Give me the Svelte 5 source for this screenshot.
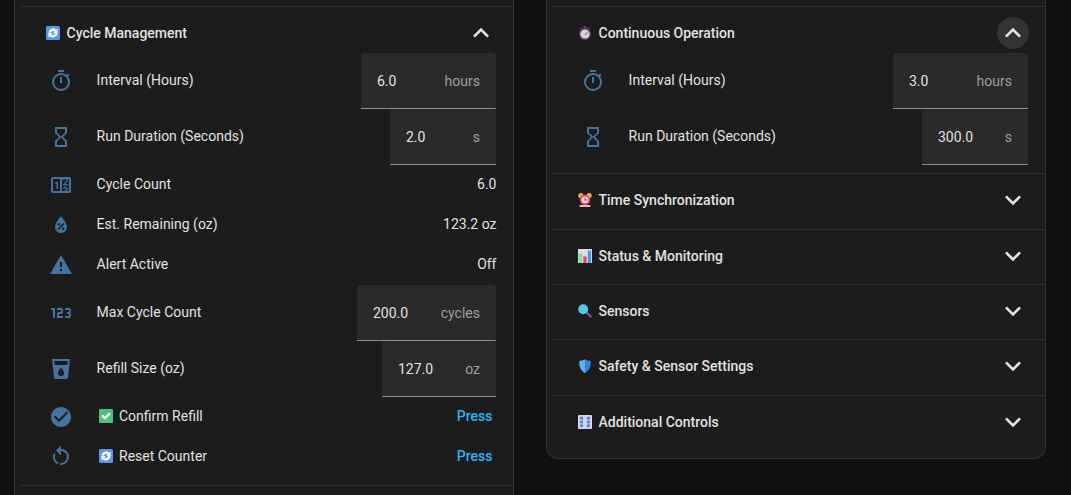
<script>
  const P = {
    timer: "M12,20A7,7 0 0,1 5,13A7,7 0 0,1 12,6A7,7 0 0,1 19,13A7,7 0 0,1 12,20M19.03,7.39L20.45,5.97C20,5.46 19.55,5 19.04,4.56L17.62,6C16.07,4.74 14.12,4 12,4A9,9 0 0,0 3,13A9,9 0 0,0 12,22C17,22 21,17.97 21,13C21,10.88 20.26,8.93 19.03,7.39M11,14H13V8H11M15,1H9V3H15V1Z",
    sand: "M6,2V8H6V8L10,12L6,16V16H6V22H18V16H18V16L14,12L18,8V8H18V2H6M16,16.5V20H8V16.5L12,12.5L16,16.5M12,11.5L8,7.5V4H16V7.5L12,11.5Z",
    counter: "M4,4H20A2,2 0 0,1 22,6V18A2,2 0 0,1 20,20H4A2,2 0 0,1 2,18V6A2,2 0 0,1 4,4M4,6V18H11V6H4M20,18V6H18.76C19,6.54 18.95,7.07 18.95,7.13C18.88,7.8 18.41,8.5 18.24,8.75L15.91,11.3L19.23,11.28L19.24,12.5L14.04,12.47L14,11.47C14,11.47 17.05,8.24 17.2,7.95C17.34,7.67 17.91,6 16.5,6C15.27,6.05 15.41,7.3 15.41,7.3L13.87,7.31C13.87,7.31 13.88,6.65 14.25,6H13V18H15.58L15.57,17.14L16.54,17.13C16.54,17.13 17.45,16.97 17.46,16.08C17.5,15.08 16.65,15.08 16.5,15.08C16.37,15.08 15.43,15.13 15.43,15.95H13.91C13.91,15.95 13.95,13.89 16.5,13.89C19.1,13.89 18.96,15.91 18.96,15.91C18.96,15.91 19,17.16 17.85,17.63L18.37,18H20M8.92,16H7.42V10.2L5.62,10.76V9.53L8.76,8.41H8.92V16Z",
    water: "M12,3.25C12,3.25 6,10 6,14C6,17.32 8.69,20 12,20A6,6 0 0,0 18,14C18,10 12,3.25 12,3.25M14.47,9.97L15.53,11.03L9.53,17.03L8.47,15.97M9.75,10A1.25,1.25 0 0,1 11,11.25A1.25,1.25 0 0,1 9.75,12.5A1.25,1.25 0 0,1 8.5,11.25A1.25,1.25 0 0,1 9.75,10M14.25,14.5A1.25,1.25 0 0,1 15.5,15.75A1.25,1.25 0 0,1 14.25,17A1.25,1.25 0 0,1 13,15.75A1.25,1.25 0 0,1 14.25,14.5Z",
    alert: "M13 14H11V9H13M13 18H11V16H13M1 21H23L12 2L1 21Z",
    numeric: "M4,17V9H2V7H6V17H4M22,15C22,16.11 21.1,17 20,17H16V15H20V13H18V11H20V9H16V7H20A2,2 0 0,1 22,9V10.5A1.5,1.5 0 0,1 20.5,12A1.5,1.5 0 0,1 22,13.5V15M14,15V17H8V13C8,11.89 8.9,11 10,11H12V9H8V7H12A2,2 0 0,1 14,9V11C14,12.11 13.1,13 12,13H10V15H14Z",
    cup: "M18.32,8H5.67L5.23,4H18.77M12,19A3,3 0 0,1 9,16C9,14 12,10.6 12,10.6C12,10.6 15,14 15,16A3,3 0 0,1 12,19M3,2L5,20.23C5.13,21.23 5.97,22 7,22H17C18,22 18.87,21.23 19,20.23L21,2H3Z",
    check: "M12 2C6.5 2 2 6.5 2 12S6.5 22 12 22 22 17.5 22 12 17.5 2 12 2M10 17L5 12L6.41 10.59L10 14.17L17.59 6.58L19 8L10 17Z",
    restart: "M12,4C14.1,4 16.1,4.8 17.6,6.3C20.7,9.4 20.7,14.5 17.6,17.6C15.8,19.5 13.3,20.2 10.9,19.9L11.4,17.9C13.1,18.1 14.9,17.5 16.2,16.2C18.5,13.9 18.5,10.1 16.2,7.7C15.1,6.6 13.5,6 12,6V10.6L7,5.6L12,0.6V4M6.3,17.6C3.7,15 3.2,11 4.9,7.9L6.4,9.4C5.3,11.6 5.7,14.4 7.6,16.2C8.1,16.7 8.7,17.1 9.4,17.4L8.8,19.4C7.8,19 7,18.4 6.3,17.6Z",
    up: "M7.41,15.41L12,10.83L16.59,15.41L18,14L12,8L6,14L7.41,15.41Z",
    down: "M7.41,8.58L12,13.17L16.59,8.58L18,10L12,16L6,10L7.41,8.58Z"
  };

  const leftRows = [
    { icon: "timer", label: "Interval (Hours)", input: "6.0", unit: "hours", w: 135 },
    { icon: "sand", label: "Run Duration (Seconds)", input: "2.0", unit: "s", w: 106 },
    { icon: "counter", label: "Cycle Count", value: "6.0" },
    { icon: "water", label: "Est. Remaining (oz)", value: "123.2 oz" },
    { icon: "alert", label: "Alert Active", value: "Off" },
    { icon: "numeric", label: "Max Cycle Count", input: "200.0", unit: "cycles", w: 139 },
    { icon: "cup", label: "Refill Size (oz)", input: "127.0", unit: "oz", w: 114 },
    { icon: "check", label: "Confirm Refill", emoji: "check", press: true },
    { icon: "restart", label: "Reset Counter", emoji: "cycle", press: true }
  ];
  const rightRows = [
    { icon: "timer", label: "Interval (Hours)", input: "3.0", unit: "hours", w: 135 },
    { icon: "sand", label: "Run Duration (Seconds)", input: "300.0", unit: "s", w: 106 }
  ];
  const collapsed = [
    { emoji: "alarm", title: "Time Synchronization" },
    { emoji: "chart", title: "Status & Monitoring" },
    { emoji: "magnify", title: "Sensors" },
    { emoji: "shield", title: "Safety & Sensor Settings" },
    { emoji: "grid", title: "Additional Controls" }
  ];
</script>

{#snippet emoji(name)}
  <svg class="emoji" viewBox="0 0 14 14" aria-hidden="true">
    {#if name === "cycle"}
      <rect width="14" height="14" rx="1.5" fill="#5a96ea" />
      <path d="M2.4 6.6A4.7 4.7 0 0 1 10.3 3.7L11.6 2.6V7.2H7.2L8.7 5.6A2.6 2.6 0 0 0 4.6 6.8ZM11.6 7.4A4.7 4.7 0 0 1 3.7 10.3L2.4 11.4V6.9H6.8L5.3 8.4A2.6 2.6 0 0 0 9.4 7.2Z" fill="#f2f6fd" />
    {:else if name === "check"}
      <rect width="14" height="14" rx="1.2" fill="#4cc27c" />
      <path d="M2.2 7.3L4 5.6L6 7.4L10.2 3.4L11.9 5.1L6 10.8Z" fill="#f4fbf6" />
    {:else if name === "stopwatch"}
      <rect x="5.6" y="0" width="2.8" height="2.2" fill="#5b4468" />
      <path d="M1.6 2.8L3 1.4L4.4 2.8L3 4ZM12.4 2.8L11 1.4L9.6 2.8L11 4Z" fill="#5b4468" />
      <circle cx="7" cy="8" r="6" fill="#584264" />
      <circle cx="7" cy="8" r="4.6" fill="#dccfe2" />
      <path d="M6.4 8.4L9.8 5.4L10.4 6L7.4 9.2Z" fill="#d8457c" />
    {:else if name === "alarm"}
      <circle cx="2.9" cy="2.6" r="2.6" fill="#e9b13c" />
      <circle cx="11.1" cy="2.6" r="2.6" fill="#e9b13c" />
      <circle cx="7" cy="6.8" r="5.2" fill="#e8476e" />
      <circle cx="7" cy="6.8" r="3.4" fill="#f8dfe6" />
      <path d="M6.5 4.4H7.5V6.6H9.2V7.6H6.5Z" fill="#b5264e" />
      <rect x="1.6" y="12" width="10.8" height="2" rx=".6" fill="#eeb9c8" />
    {:else if name === "chart"}
      <rect width="14" height="14" fill="#dcdce2" />
      <rect x="0.8" y="4.5" width="3.3" height="9.5" fill="#83dc8f" />
      <rect x="5.3" y="7.5" width="3.3" height="6.5" fill="#e8407c" />
      <rect x="9.8" y="1.5" width="3.3" height="12.5" fill="#3d9be8" />
    {:else if name === "magnify"}
      <path d="M8 9.4L9.6 7.8L14 12.4L12.4 14Z" fill="#8a5292" />
      <circle cx="5.2" cy="5.2" r="5" fill="#55c5ea" />
    {:else if name === "shield"}
      <path d="M7 .2C8.8 1.4 10.4 1.8 12.6 1.8C13.2 7 11.6 11.6 7 14Z" fill="#2f83e2" />
      <path d="M7 .2C5.2 1.4 3.6 1.8 1.4 1.8C.8 7 2.4 11.6 7 14Z" fill="#5cb1f5" />
    {:else if name === "grid"}
      <rect width="14" height="14" rx="1" fill="#ddd3ea" />
      {#each [3.6, 10.4] as x}
        {#each [3.2, 7, 10.8] as y}
          <circle cx={x} cy={y} r="1.7" fill="#4a8fdc" />
        {/each}
      {/each}
    {/if}
  </svg>
{/snippet}

{#snippet rows(list)}
  {#each list as r}
    <div class="row" class:tall={r.input}>
      <svg class="icon" viewBox="0 0 24 24" aria-hidden="true"><path d={P[r.icon]} /></svg>
      <span class="label">
        {#if r.emoji}{@render emoji(r.emoji)}{/if}
        <span>{r.label}</span>
      </span>
      {#if r.input}
        <div class="field" style="width: {r.w}px"><span>{r.input}</span><span class="unit">{r.unit}</span></div>
      {:else if r.press}
        <span class="press">Press</span>
      {:else}
        <span class="value">{r.value}</span>
      {/if}
    </div>
  {/each}
{/snippet}

<div class="page">
  <section class="card left">
    <div class="item">
      <div class="head">
        {@render emoji("cycle")}
        <span class="title">Cycle Management</span>
        <span class="chev"><svg viewBox="0 0 24 24" aria-hidden="true"><path d={P.up} /></svg></span>
      </div>
      <div class="body">{@render rows(leftRows)}</div>
    </div>
    <div class="item"></div>
  </section>

  <section class="card right">
    <div class="item">
      <div class="head">
        {@render emoji("stopwatch")}
        <span class="title">Continuous Operation</span>
        <span class="chev focus"><svg viewBox="0 0 24 24" aria-hidden="true"><path d={P.up} /></svg></span>
      </div>
      <div class="body">{@render rows(rightRows)}</div>
    </div>
    {#each collapsed as c}
      <div class="item">
        <div class="head">
          {@render emoji(c.emoji)}
          <span class="title">{c.title}</span>
          <span class="chev"><svg viewBox="0 0 24 24" aria-hidden="true"><path d={P.down} /></svg></span>
        </div>
      </div>
    {/each}
  </section>
</div>

<style>
  :global(body) {
    margin: 0;
    background: #111111;
    overflow: hidden;
  }
  .page {
    display: grid;
    grid-template-columns: 500px 500px;
    gap: 32px;
    align-items: start;
    height: 495px;
    padding-left: 14px;
    overflow: hidden;
    font-family: Roboto, "Liberation Sans", sans-serif;
    font-size: 14px;
    color: #e1e1e1;
  }
  .card {
    box-sizing: border-box;
    background: #1c1c1c;
    border: 1px solid #2f2f2f;
    border-top: 0;
    padding: 6px 0 0 5px;
  }
  .left {
    height: 495px;
    border-bottom: 0;
  }
  .right {
    border-radius: 0 0 12px 12px;
    padding-bottom: 8px;
  }
  .item {
    border-top: 1px solid #2f2f2f;
  }
  .head {
    display: flex;
    align-items: center;
    height: 40px;
    padding: 6px 0 8.35px 26px;
  }
  .title {
    font-weight: 500;
    margin-left: 6.5px;
  }
  .emoji {
    display: block;
    flex: none;
    width: 14px;
    height: 14px;
  }
  .chev {
    display: flex;
    align-items: center;
    justify-content: center;
    width: 32px;
    height: 32px;
    margin-left: auto;
    margin-right: 16px;
    border-radius: 50%;
  }
  .chev svg {
    width: 32px;
    height: 32px;
    fill: #e1e1e1;
  }
  .chev.focus {
    background: #333333;
  }
  .body {
    margin-top: -8.35px;
    padding: 0 17px 8.3px 29px;
  }
  .row {
    display: flex;
    align-items: center;
    height: 40px;
  }
  .row.tall {
    height: 56px;
  }
  .icon {
    flex: none;
    width: 24px;
    height: 24px;
    margin-right: 24px;
    fill: #44739e;
  }
  .label {
    display: flex;
    align-items: center;
    gap: 6px;
    position: relative;
    top: -1px;
    margin-left: -0.4px;
  }
  .label .emoji {
    margin-left: 2.4px;
  }
  .value {
    margin-left: auto;
    margin-right: -0.5px;
    position: relative;
    top: -1px;
  }
  .press {
    margin-left: auto;
    margin-right: 3.5px;
    position: relative;
    top: -1px;
    color: #29b6f6;
    font-weight: 500;
  }
  .field {
    box-sizing: border-box;
    display: flex;
    align-items: center;
    justify-content: space-between;
    height: 56px;
    margin-left: auto;
    padding: 0 16px;
    background: #2a2a2a;
    border-bottom: 1px solid #8c8c8c;
    border-radius: 4px 4px 0 0;
  }
  .unit {
    color: #9e9e9e;
  }
</style>
